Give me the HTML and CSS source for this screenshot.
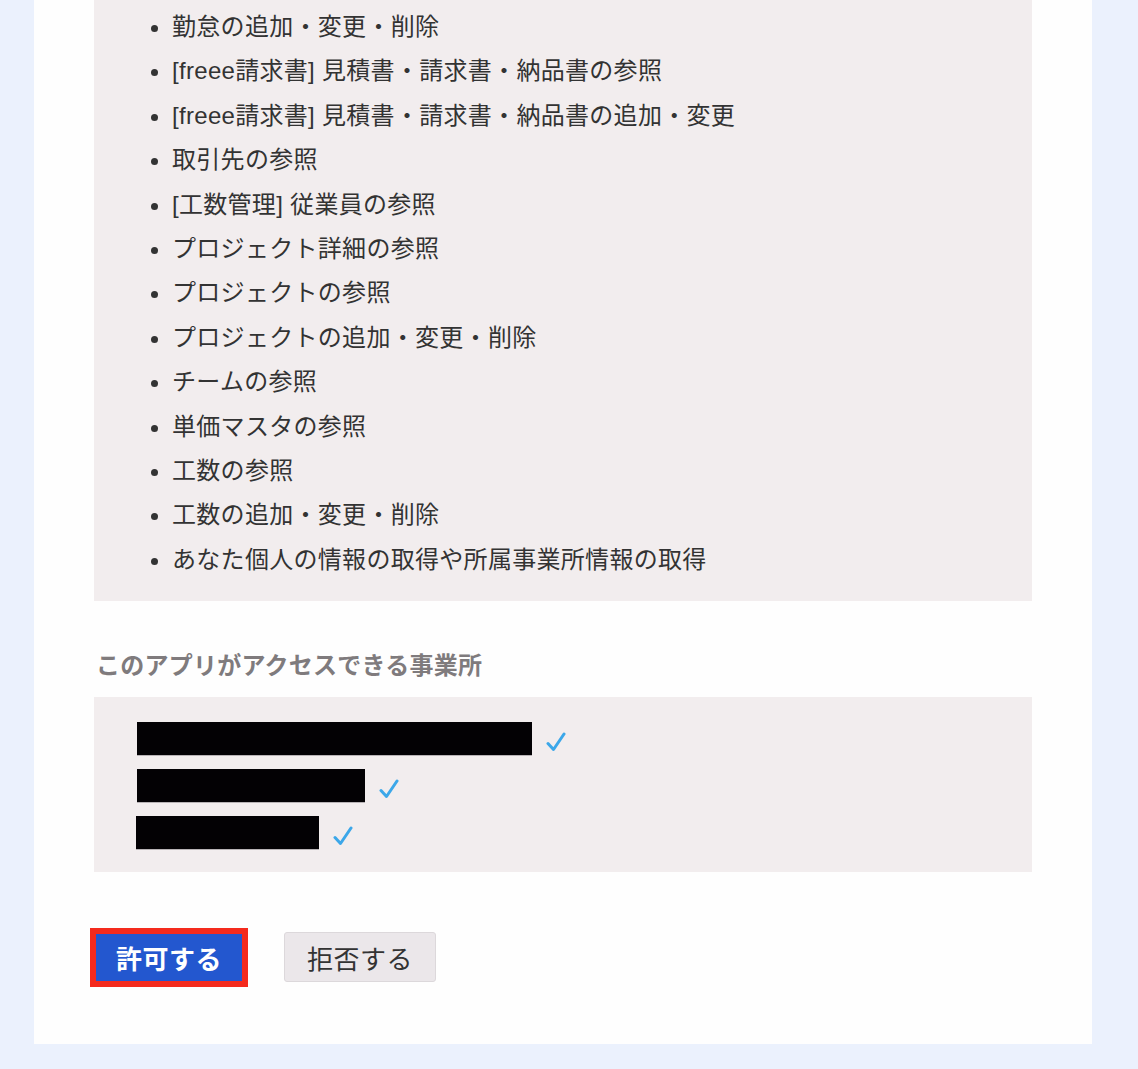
FILE: index.html
```html
<!DOCTYPE html>
<html lang="ja">
<head>
    <meta charset="UTF-8">
    <meta name="viewport" content="width=device-width, initial-scale=1.0">
    <title>アプリ連携の許可</title>
    <link rel="stylesheet" href="styles.css">
</head>
<body>
    <div class="card">
        <!-- Permission scopes -->
        <div class="scope-box">
            <ul class="scope-list">
                <li>勤怠の追加・変更・削除</li>
                <li>[freee請求書] 見積書・請求書・納品書の参照</li>
                <li>[freee請求書] 見積書・請求書・納品書の追加・変更</li>
                <li>取引先の参照</li>
                <li>[工数管理] 従業員の参照</li>
                <li>プロジェクト詳細の参照</li>
                <li>プロジェクトの参照</li>
                <li>プロジェクトの追加・変更・削除</li>
                <li>チームの参照</li>
                <li>単価マスタの参照</li>
                <li>工数の参照</li>
                <li>工数の追加・変更・削除</li>
                <li>あなた個人の情報の取得や所属事業所情報の取得</li>
            </ul>
        </div>

        <h2 class="section-title">このアプリがアクセスできる事業所</h2>

        <!-- Companies (names redacted) -->
        <div class="company-box">
            <div class="company-row">
                <span class="redacted bar-1"></span>
                <svg class="check" viewBox="0 0 20 20"><path d="M2 11.5 L7.5 17.5 L18 2"/></svg>
            </div>
            <div class="company-row">
                <span class="redacted bar-2"></span>
                <svg class="check" viewBox="0 0 20 20"><path d="M2 11.5 L7.5 17.5 L18 2"/></svg>
            </div>
            <div class="company-row">
                <span class="redacted bar-3"></span>
                <svg class="check" viewBox="0 0 20 20"><path d="M2 11.5 L7.5 17.5 L18 2"/></svg>
            </div>
        </div>

        <div class="actions">
            <button class="btn btn-allow">許可する</button>
            <button class="btn btn-deny">拒否する</button>
        </div>
    </div>
</body>
</html>
```

FILE: styles.css
```css
/* Page */
body {
    margin: 0;
    padding: 0;
    background-color: #ebf1fd;
    font-family: "Liberation Sans", "Noto Sans CJK JP", sans-serif;
    color: #333;
}

.card {
    background-color: #fefefe;
    width: 1058px;
    margin: 0 0 26px 34px;
    padding: 0 60px 62px;
    box-sizing: border-box;
}

/* Scope list */
.scope-box {
    background-color: #f2edee;
    padding: 5px 0 19px;
}

.scope-list {
    margin: 0;
    padding-left: 78px;
    font-size: 24px;
    letter-spacing: 0.3px;
    line-height: 44.4px;
}

/* Section heading */
.section-title {
    margin: 47px 0 13px 2px;
    font-size: 24px;
    letter-spacing: 0.25px;
    line-height: 36px;
    font-weight: bold;
    color: #7f7b7d;
}

/* Company list */
.company-box {
    background-color: #f2edee;
    padding: 25px 0 22px 43px;
    display: flex;
    flex-direction: column;
    gap: 13px;
}

.company-row {
    display: flex;
    align-items: center;
    height: 34px;
}

.redacted {
    display: block;
    height: 34px;
    background-color: #030104;
    border-bottom: 1px solid #b8b3b6;
    box-sizing: border-box;
}

.bar-1 { width: 395px; }
.bar-2 { width: 228px; }
.bar-3 { width: 183px; margin-left: -1px; }

.check {
    width: 20px;
    height: 20px;
    margin: 6px 0 0 14px;
    fill: none;
    stroke: #3ca7e9;
    stroke-width: 3;
    stroke-linecap: round;
    stroke-linejoin: round;
}

/* Buttons */
.actions {
    margin-top: 60px;
    display: flex;
    align-items: center;
    gap: 42px;
}

.btn {
    font-family: "Liberation Sans", "Noto Sans CJK JP", sans-serif;
    font-size: 26px;
    cursor: pointer;
}

.btn-allow {
    margin-left: 2px;
    width: 146px;
    height: 47px;
    background-color: #2357cf;
    color: #fff;
    font-weight: bold;
    letter-spacing: 0.5px;
    border: none;
    outline: 6px solid #f42a1d;
    padding: 0;
}

.btn-deny {
    width: 152px;
    height: 50px;
    background-color: #ebe7ea;
    color: #333;
    letter-spacing: 0.5px;
    border: 1px solid #dcd8db;
    border-radius: 3px;
    padding: 0;
}
```
